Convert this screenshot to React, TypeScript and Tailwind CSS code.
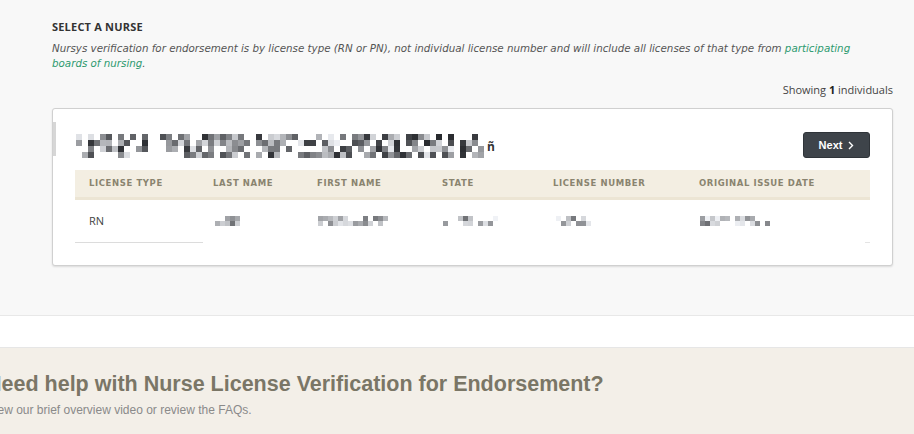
import React from 'react';

// redacted values in the screenshot are pixel mosaics; drawn as deterministic blocks
function Mosaic({ width, rows, seed, cell = 6, light = false }: { width: number; rows: number; seed: number; cell?: number; light?: boolean }) {
  let s = seed;
  const rand = () => {
    s = (s * 9301 + 49297) % 233280;
    return s / 233280;
  };
  const cols = Math.floor(width / cell);
  const rects: React.ReactNode[] = [];
  for (let r = 0; r < rows; r++) {
    for (let c = 0; c < cols; c++) {
      const v = rand();
      if (v < 0.35) continue;
      const base = light ? 110 : 40;
      const span = light ? 130 : 200;
      const g = Math.round(base + rand() * span);
      rects.push(<rect key={r + '-' + c} x={c * cell} y={r * cell} width={cell} height={cell} fill={`rgb(${g},${g + 2},${g + 6})`} />);
    }
  }
  return (
    <svg width={cols * cell} height={rows * cell} className="block">
      {rects}
    </svg>
  );
}

const headers = ['License Type', 'Last Name', 'First Name', 'State', 'License Number', 'Original Issue Date'];
const colWidths = ['w-[124px]', 'w-[104px]', 'w-[125px]', 'w-[111px]', 'w-[146px]', 'flex-1'];

export default function App() {
  return (
    <div className="w-[914px] h-[434px] overflow-hidden bg-white" style={{ fontFamily: '"Open Sans", sans-serif' }}>
      <section className="bg-[#f8f8f8] pt-[19px] pl-[52px] pr-[21px] pb-[49px] border-b border-[#e8e8e8]">
        <h2 className="text-[11px] leading-[15px] font-bold text-[#333] tracking-[0.2px]">SELECT A NURSE</h2>
        <p className="mt-[7px] pr-[10px] text-[10.3px] leading-[15px] italic text-[#555]" style={{ fontFamily: '"DejaVu Sans", sans-serif' }}>
          Nursys verification for endorsement is by license type (RN or PN), not individual license number and will include all licenses of that type from{' '}
          <a className="text-[#2d9a6f]">participating boards of nursing</a>.
        </p>
        <div className="mt-[11px] text-right text-[11px] leading-[15px] text-[#444]">
          Showing <span className="font-bold text-[#222]">1</span> individuals
        </div>
        <div className="mt-[11px] bg-white border border-[#d0d0d0] rounded-[3px] shadow-[0_1px_2px_rgba(0,0,0,0.12)] pb-[22px]">
          <div className="flex items-center pt-[11px] h-[61px]">
            <div className="w-[3px] h-[34px] bg-[#d6d6d6] self-start mt-[2px]" />
            <div className="ml-[20px] flex items-end gap-[3px] mt-[2px]">
              <Mosaic width={410} rows={4} seed={17} />
              <span className="text-[12px] leading-none font-bold text-[#333] mb-[5px]">ñ</span>
            </div>
            <button className="ml-auto mr-[22px] h-[26px] w-[67px] bg-[#3e444a] border border-[#2f3439] rounded-[3px] text-white text-[11px] font-bold flex items-center justify-center gap-[6px]" style={{ fontFamily: '"Liberation Sans", Arial, sans-serif' }}>
              Next
              <svg width="6" height="9" viewBox="0 0 6 9" fill="none" stroke="white" strokeWidth="1.4">
                <path d="M1 1l3.5 3.5L1 8" />
              </svg>
            </button>
          </div>
          <div className="mx-[22px]">
            <div className="flex h-[30px] items-center bg-[#f3eee2] border-b-[3px] border-[#ece5d4] pl-[14px]">
              {headers.map((h, i) => (
                <div key={h} className={`${colWidths[i]} text-[8.5px] font-bold uppercase tracking-[0.6px] text-[#8a846f]`} style={{ fontFamily: '"DejaVu Sans", sans-serif' }}>
                  {h}
                </div>
              ))}
            </div>
            <div className="flex h-[42px] items-center pl-[14px] text-[11px] text-[#444]">
              <div className="w-[124px]">RN</div>
              <div className="w-[104px] pl-[2px]"><Mosaic width={25} rows={2} seed={3} cell={5} light /></div>
              <div className="w-[125px] pl-[1px]"><Mosaic width={70} rows={2} seed={8} cell={5} light /></div>
              <div className="w-[111px] pl-[1px]"><Mosaic width={55} rows={2} seed={22} cell={5} light /></div>
              <div className="w-[146px] pl-[3px]"><Mosaic width={40} rows={2} seed={41} cell={5} light /></div>
              <div className="flex-1 pl-[1px]"><Mosaic width={70} rows={2} seed={57} cell={5} light /></div>
            </div>
            <div className="flex justify-between">
              <div className="w-[128px] h-px bg-[#dcdcdc]" />
              <div className="w-[5px] h-px bg-[#e4e4e4]" />
            </div>
          </div>
        </div>
      </section>
      <div className="h-[32px] bg-white border-b border-[#e6e6e6]" />
      <section className="bg-[#f3efe8] h-[100px] pt-[23px] ml-[-14px]" style={{ fontFamily: '"Liberation Sans", Arial, sans-serif' }}>
        <h3 className="text-[21.5px] leading-[26px] font-bold text-[#7a7666] whitespace-nowrap">Need help with Nurse License Verification for Endorsement?</h3>
        <p className="mt-[5px] text-[12px] leading-[16px] text-[#8a8a8a] ml-[1px] whitespace-nowrap">View our brief overview video or review the FAQs.</p>
      </section>
    </div>
  );
}
